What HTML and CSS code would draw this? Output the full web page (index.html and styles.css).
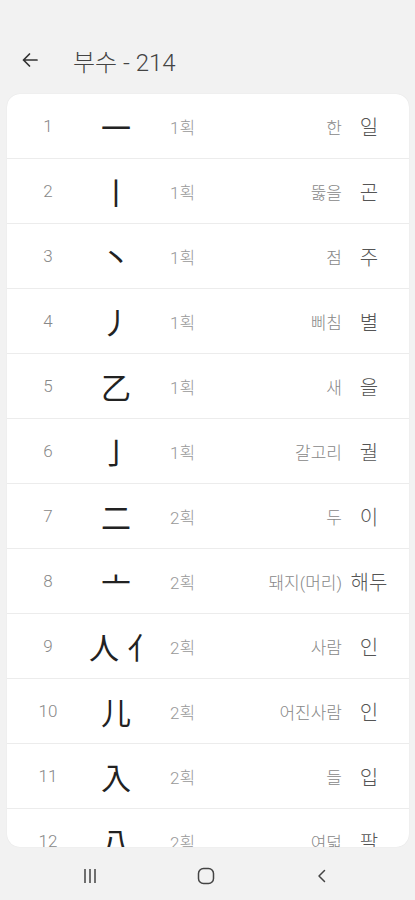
FILE: index.html
```html
<!DOCTYPE html>
<html lang="ko">
<head>
  <meta charset="UTF-8" />
  <meta name="viewport" content="width=device-width, initial-scale=1.0" />
  <link rel="stylesheet" href="styles.css">
</head>
<body>

  <div class="screen">
    <header class="top-bar">
      <a href="#" class="back">
        <svg width="20" height="20" viewBox="0 0 20 20"><path d="M17 10H3.5M9.5 4L3.5 10l6 6" fill="none" stroke="#333" stroke-width="1.7" stroke-linecap="round" stroke-linejoin="round"/></svg>
      </a>
      <h1 class="title">부수 - 214</h1>
    </header>

    <div class="card">
      <div class="row"><span class="no">1</span><span class="han">一</span><span class="stroke">1획</span><span class="mean">한</span><span class="sound">일</span></div>
      <div class="row"><span class="no">2</span><span class="han">丨</span><span class="stroke">1획</span><span class="mean">뚫을</span><span class="sound">곤</span></div>
      <div class="row"><span class="no">3</span><span class="han">丶</span><span class="stroke">1획</span><span class="mean">점</span><span class="sound">주</span></div>
      <div class="row"><span class="no">4</span><span class="han">丿</span><span class="stroke">1획</span><span class="mean">삐침</span><span class="sound">별</span></div>
      <div class="row"><span class="no">5</span><span class="han">乙</span><span class="stroke">1획</span><span class="mean">새</span><span class="sound">을</span></div>
      <div class="row"><span class="no">6</span><span class="han">亅</span><span class="stroke">1획</span><span class="mean">갈고리</span><span class="sound">궐</span></div>
      <div class="row"><span class="no">7</span><span class="han">二</span><span class="stroke">2획</span><span class="mean">두</span><span class="sound">이</span></div>
      <div class="row"><span class="no">8</span><span class="han">亠</span><span class="stroke">2획</span><span class="mean">돼지(머리)</span><span class="sound">해두</span></div>
      <div class="row"><span class="no">9</span><span class="han">人 亻</span><span class="stroke">2획</span><span class="mean">사람</span><span class="sound">인</span></div>
      <div class="row"><span class="no">10</span><span class="han">儿</span><span class="stroke">2획</span><span class="mean">어진사람</span><span class="sound">인</span></div>
      <div class="row"><span class="no">11</span><span class="han">入</span><span class="stroke">2획</span><span class="mean">들</span><span class="sound">입</span></div>
      <div class="row"><span class="no">12</span><span class="han">八</span><span class="stroke">2획</span><span class="mean">여덟</span><span class="sound">팔</span></div>
    </div>

    <nav class="nav-bar">
      <svg width="16" height="16" viewBox="0 0 16 16"><path d="M3 1v14M8 1v14M13 1v14" stroke="#444" stroke-width="1.5"/></svg>
      <svg width="18" height="18" viewBox="0 0 18 18"><rect x="1.5" y="1.5" width="15" height="15" rx="5" fill="none" stroke="#444" stroke-width="1.5"/></svg>
      <svg width="16" height="16" viewBox="0 0 16 16"><path d="M10.5 2.5L5 8l5.5 5.5" fill="none" stroke="#444" stroke-width="1.5" stroke-linecap="round" stroke-linejoin="round"/></svg>
    </nav>
  </div>

</body>
</html>
```

FILE: styles.css
```css
body {
  margin: 0;
  font-family: 'Noto Sans', 'Noto Sans CJK KR', sans-serif;
  background: #f2f2f2;
  color: #333;
}

.screen {
  height: 900px;
  display: flex;
  flex-direction: column;
  overflow: hidden;
}

.top-bar {
  height: 94px;
  display: flex;
  align-items: center;
  padding: 26px 0 0 20px;
  box-sizing: border-box;
}

.back {
  display: flex;
  width: 20px;
  height: 20px;
  margin-right: 33px;
}

.title {
  margin: 0;
  font-size: 24px;
  font-weight: 300;
  color: #444;
  font-family: 'Roboto', 'Noto Sans CJK KR', sans-serif;
}

.card {
  flex: 1;
  margin: 0 6px 0 7px;
  background: #fff;
  border-radius: 13px;
  overflow: hidden;
  box-shadow: 0 0 1px rgba(0, 0, 0, 0.12);
}

.row {
  display: grid;
  grid-template-columns: 82px 54px 90px 1fr 40px;
  align-items: center;
  height: 64px;
  padding-right: 20px;
  border-bottom: 1px solid #ececec;
  font-family: 'Roboto', 'Noto Sans CJK KR', sans-serif;
  font-weight: 300;
}

.no {
  text-align: center;
  font-size: 17px;
  color: #888;
}

.han {
  text-align: center;
  font-size: 30px;
  font-weight: 400;
  color: #222;
  white-space: nowrap;
  font-family: 'Noto Sans CJK KR', sans-serif;
}

.stroke {
  padding-left: 27px;
  font-size: 17px;
  color: #999;
}

.mean {
  text-align: right;
  padding-right: 7px;
  font-size: 17px;
  color: #888;
  white-space: nowrap;
}

.sound {
  text-align: center;
  font-size: 20px;
  color: #555;
  white-space: nowrap;
}

.nav-bar {
  height: 53px;
  display: flex;
  align-items: center;
  justify-content: space-between;
  padding: 5px 85px 0 82px;
  box-sizing: border-box;
}
```
